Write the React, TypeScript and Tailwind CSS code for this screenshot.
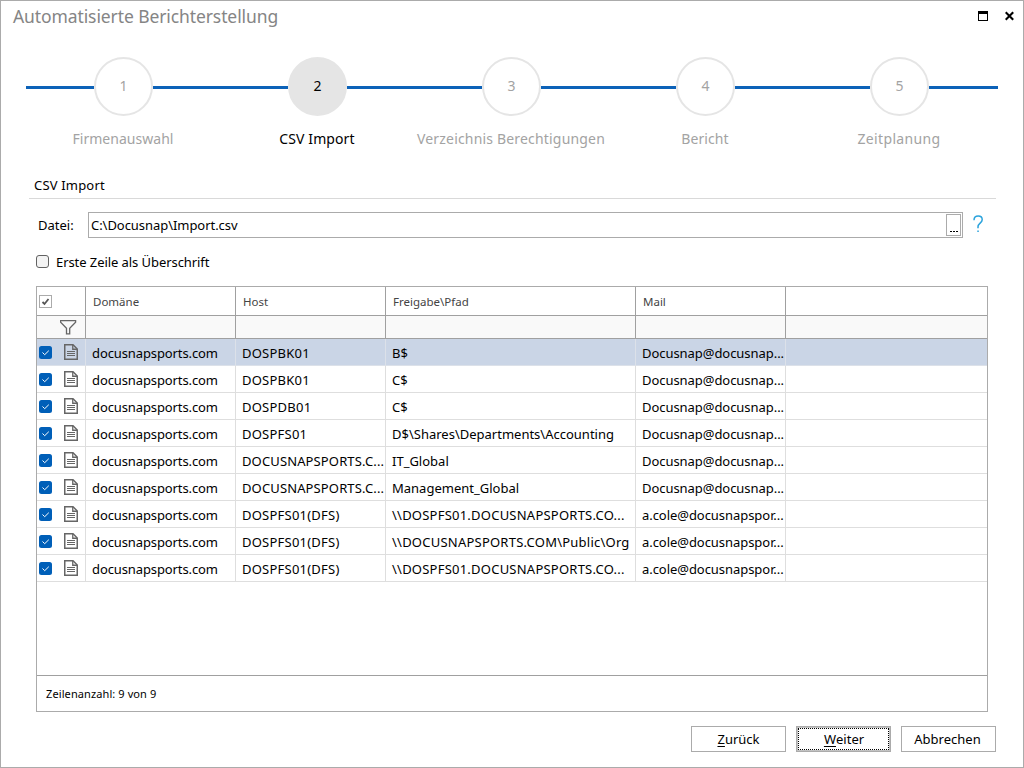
import type { ReactNode } from 'react';

const steps = [
  { n: '1', label: 'Firmenauswahl', cls: 'tracking-[0.03px]' },
  { n: '2', label: 'CSV Import', cls: 'tracking-[0.1px]' },
  { n: '3', label: 'Verzeichnis Berechtigungen', cls: 'tracking-[0.18px]' },
  { n: '4', label: 'Bericht', cls: 'tracking-[0.1px]' },
  { n: '5', label: 'Zeitplanung', cls: 'tracking-[0.35px]' },
];

const D = 'Docusnap@docusnap...';
const A = 'a.cole@docusnapspor...';
const UPPER = 'tracking-[0.23px]';
const rows = [
  ['DOSPBK01', 'B$', D, ''],
  ['DOSPBK01', 'C$', D, ''],
  ['DOSPDB01', 'C$', D, ''],
  ['DOSPFS01', 'D$\\Shares\\Departments\\Accounting', D, ''],
  ['DOCUSNAPSPORTS.C...', 'IT_Global', D, ''],
  ['DOCUSNAPSPORTS.C...', 'Management_Global', D, ''],
  ['DOSPFS01(DFS)', '\\\\DOSPFS01.DOCUSNAPSPORTS.CO...', A, UPPER],
  ['DOSPFS01(DFS)', '\\\\DOCUSNAPSPORTS.COM\\Public\\Org', A, UPPER],
  ['DOSPFS01(DFS)', '\\\\DOSPFS01.DOCUSNAPSPORTS.CO...', A, UPPER],
];

const COLS = 'grid grid-cols-[49px_150px_150px_250px_150px_201px]';

function DocIcon() {
  return (
    <svg width="14" height="16" viewBox="0 0 14 16" fill="none" stroke="#666" className="shrink-0">
      <path d="M0.75 0.75H9L13.25 5V15.25H0.75Z" strokeWidth="1.5" />
      <path d="M8.75 1V5.25H13" strokeWidth="1.3" />
      <path d="M3 7.5H11M3 9.5H11M3 11.5H11" strokeWidth="1.1" />
    </svg>
  );
}

function RowCheck() {
  return (
    <svg width="13" height="13" viewBox="0 0 13 13" className="shrink-0">
      <rect width="13" height="13" rx="2.5" fill="#005fb8" />
      <path d="M3.5 6.5L5.7 8.7L9.8 4.7" fill="none" stroke="#fff" strokeWidth="1" />
    </svg>
  );
}

function Cell({ children, selected, text = '' }: { children?: ReactNode; selected: boolean; text?: string }) {
  return (
    <div className={`flex items-center overflow-hidden border-r pl-1.5 pt-[3px] ${selected ? 'border-[#dce1e9]' : 'border-[#dedede]'} ${text}`}>
      {children}
    </div>
  );
}

export default function App() {
  return (
    <div className="flex h-[768px] w-[1024px] flex-col overflow-hidden border border-[#ababab] bg-white font-['Noto_Sans','Open_Sans',sans-serif] text-[13px] whitespace-nowrap text-black">
      <header className="flex h-[46px] shrink-0 justify-between pl-3">
        <h1 className="mt-[3px] text-[17.5px] leading-6 tracking-[-0.1px] text-[#858585]">Automatisierte Berichterstellung</h1>
        <div className="mt-2.5 mr-[7px] flex gap-4">
          <svg width="11" height="11" viewBox="0 0 11 11" shapeRendering="crispEdges">
            <path d="M0.5 0.5H9.5V9.5H0.5Z" fill="none" stroke="#000" />
            <path d="M0 0H10V3H0Z" />
          </svg>
          <svg width="11" height="11" viewBox="0 0 11 11">
            <path d="M0.7 1.2L8.2 8.7M8.2 1.2L0.7 8.7" stroke="#000" strokeWidth="2.1" />
          </svg>
        </div>
      </header>

      <nav className="flex h-[124px] shrink-0 pt-2.5 pl-[25px]">
        {steps.map((s, i) => (
          <div key={s.n} className={i === 4 ? 'w-[196px]' : 'w-[194px]'}>
            <div className="flex h-[60px] items-start">
              <div className="mt-[29px] h-[3px] w-[68px] bg-[#0c62b8]" />
              <div
                className={`flex size-[59px] shrink-0 items-center justify-center rounded-full border-2 border-[#e5e5e5] pb-0.5 text-[14px] ${
                  s.n === '2' ? 'bg-[#e5e5e5] text-black' : 'text-[#a3a3a3]'
                }`}
              >
                {s.n}
              </div>
              <div className="mt-[29px] h-[3px] flex-1 bg-[#0c62b8]" />
            </div>
            <div className={`mt-3 w-[194px] text-center text-[14px] leading-5 ${s.n === '2' ? 'text-black' : 'text-[#a3a3a3]'} ${s.cls}`}>
              {s.label}
            </div>
          </div>
        ))}
      </nav>

      <main className="flex flex-1 flex-col">
        <h2 className="ml-7 flex h-7 w-[967px] items-center border-b border-[#d9d9d9] pt-0.5 pl-[5px] tracking-[0.18px]">CSV Import</h2>

        <div className="mt-[13px] flex h-[26px] items-center pl-[37px]">
          <span className="w-[50px] pt-0.5">Datei:</span>
          <div className="flex h-[26px] w-[875px] items-center justify-between border border-[#ababab] pr-px pl-0.5">
            <span className="pt-0.5 tracking-[-0.05px]">C:\Docusnap\Import.csv</span>
            <button className="flex h-[22px] w-[15px] items-end justify-center gap-px border border-[#ababab] pb-[3px]">
              <i className="h-px w-0.5 bg-black" />
              <i className="h-px w-0.5 bg-black" />
              <i className="h-px w-0.5 bg-black" />
            </button>
          </div>
          <svg width="12" height="18" viewBox="0 0 12 18" className="mb-0.5 ml-2.5" fill="none" stroke="#2ba3dc">
            <path d="M1 5.2C1 2.6 2.8 1.1 5.2 1.1C7.7 1.1 9.2 2.6 9.2 4.7C9.2 7.9 5 8.3 5 11.7V13.2" strokeWidth="1.5" />
            <path d="M4.3 16.2H5.8" strokeWidth="1.5" />
          </svg>
        </div>

        <label className="mt-[13px] ml-[35px] flex h-[21px] items-center gap-[7px]">
          <span className="size-[13px] rounded-[3px] border border-[#626262] bg-[#f3f3f3]" />
          <span className="pt-0.5 tracking-[-0.07px]">Erste Zeile als Überschrift</span>
        </label>

        <section className="mt-3.5 ml-[35px] flex h-[426px] w-[952px] flex-col border border-[#ababab]">
          <div className={`${COLS} h-[29px] shrink-0 border-b border-[#a0a0a0] text-[11.5px] text-[#444]`}>
            <div className="border-r border-[#a0a0a0] pt-2 pl-0.5">
              <svg width="13" height="13" viewBox="0 0 13 13">
                <rect x="0.5" y="0.5" width="12" height="12" fill="#fff" stroke="#ababab" />
                <path d="M3.5 7L5.5 9L9.5 4" fill="none" stroke="#555" strokeWidth="1.8" />
              </svg>
            </div>
            {['Domäne', 'Host', 'Freigabe\\Pfad', 'Mail'].map((t) => (
              <div key={t} className="flex items-center border-r border-[#a0a0a0] pt-0.5 pl-[7px]">
                {t}
              </div>
            ))}
            <div />
          </div>
          <div className={`${COLS} h-[23px] shrink-0 border-b border-[#a0a0a0] bg-[#f9f9f9]`}>
            <div className="border-r border-[#a0a0a0] pt-[3.5px] pl-[23px]">
              <svg width="17" height="15" viewBox="0 0 17 15" fill="none" stroke="#666" strokeWidth="1.3">
                <path d="M0.6 0.7H15.6V2.2L9.7 8.2V13.8H6.5V8.2L0.6 2.2Z" />
              </svg>
            </div>
            <div className="border-r border-[#a0a0a0]" />
            <div className="border-r border-[#a0a0a0]" />
            <div className="border-r border-[#a0a0a0]" />
            <div className="border-r border-[#a0a0a0]" />
            <div />
          </div>
          <div className="flex-1">
            {rows.map(([host, path, mail, pathCls], i) => {
              const sel = i === 0;
              return (
                <div key={i} className={`${COLS} h-[27px] border-b ${sel ? 'border-[#dce1e9] bg-[#cad5e6]' : 'border-[#dedede]'}`}>
                  <div className={`flex items-center gap-3 border-r pl-0.5 ${sel ? 'border-[#dce1e9]' : 'border-[#dedede]'}`}>
                    <RowCheck />
                    <DocIcon />
                  </div>
                  <Cell selected={sel} text="tracking-[-0.11px]">docusnapsports.com</Cell>
                  <Cell selected={sel} text={host.length > 15 ? 'tracking-[0.13px]' : UPPER}>{host}</Cell>
                  <Cell selected={sel} text={pathCls}>{path}</Cell>
                  <Cell selected={sel} text="tracking-[-0.05px]">{mail}</Cell>
                  <div />
                </div>
              );
            })}
          </div>
          <div className="flex h-9 shrink-0 items-center border-t border-[#a0a0a0] pt-0.5 pl-[9px] text-[11px] tracking-[0.1px]">Zeilenanzahl: 9 von 9</div>
        </section>

        <div className="mt-3.5 mr-[27px] flex justify-end gap-2.5">
          <button className="h-[26px] w-[95px] border border-[#ababab] pt-0.5">
            <span className="underline underline-offset-2">Z</span>urück
          </button>
          <button className="h-[26px] w-[95px] border-2 border-[#c2c2c2] outline outline-1 -outline-offset-1 outline-[#ababab]">
            <span className="flex size-full items-center justify-center border border-dotted border-black pt-0.5 pl-px">
              <span className="underline underline-offset-2">W</span>eiter
            </span>
          </button>
          <button className="h-[26px] w-[95px] border border-[#ababab] pt-0.5 pr-0.5">Abbrechen</button>
        </div>
      </main>
    </div>
  );
}
